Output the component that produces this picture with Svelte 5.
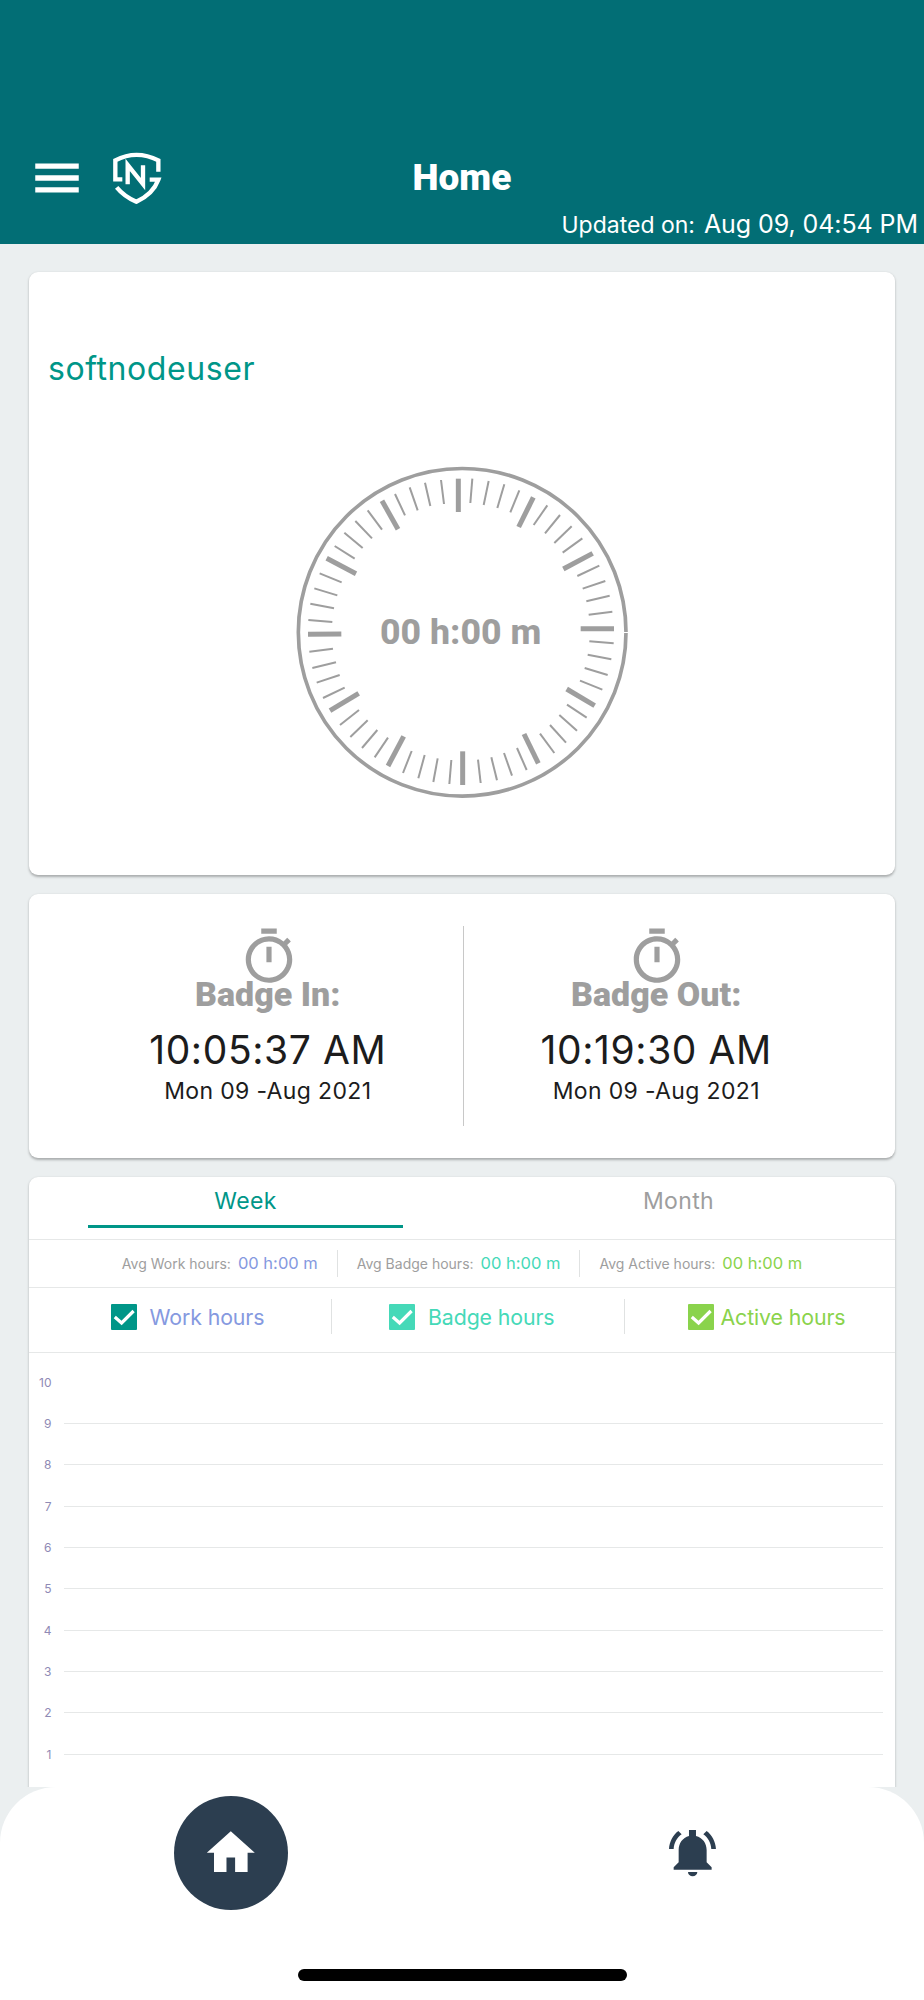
<script lang="ts">
  type Line = [number, number, number, number];

  const hourTicks: Line[] = [
    [535, 86, 535, 186], [760, 142, 716, 231], [938, 310, 850, 357],
    [1002, 536, 902, 536], [944, 767, 860, 717], [775, 940, 732, 852],
    [548, 1005, 548, 904], [324, 948, 371, 859], [150, 782, 236, 730],
    [84, 553, 184, 552], [140, 325, 228, 371], [306, 152, 354, 238]
  ];

  const minuteTicks: Line[] = [
    [577, 86, 571, 159], [626, 93, 611, 165], [673, 103, 652, 174], [718, 121, 691, 187],
    [802, 166, 761, 225], [840, 195, 795, 250], [875, 229, 823, 279], [907, 265, 848, 308],
    [958, 347, 892, 378], [976, 393, 908, 416], [989, 437, 919, 454], [997, 485, 926, 494],
    [1001, 580, 928, 574], [994, 628, 923, 614], [983, 675, 914, 654], [967, 719, 900, 692],
    [920, 803, 861, 764], [891, 842, 838, 795], [858, 878, 810, 825], [823, 909, 780, 851],
    [740, 960, 711, 894], [696, 977, 672, 909], [651, 991, 634, 922], [602, 999, 594, 929],
    [508, 1002, 514, 930], [460, 996, 473, 925], [415, 985, 434, 915], [369, 969, 395, 903],
    [284, 922, 324, 863], [246, 894, 292, 840], [211, 861, 263, 811], [180, 825, 237, 780],
    [129, 744, 194, 713], [110, 698, 179, 675], [97, 654, 168, 637], [88, 605, 159, 596],
    [85, 510, 157, 516], [91, 461, 162, 475], [103, 415, 172, 436], [119, 370, 185, 397],
    [164, 288, 224, 326], [193, 248, 248, 294], [226, 213, 276, 265], [263, 181, 306, 239],
    [345, 132, 375, 196], [389, 112, 413, 181], [435, 98, 451, 168], [483, 90, 492, 162]
  ];

  const badges = [
    { label: 'Badge In:', time: '10:05:37 AM', date: 'Mon 09 -Aug 2021' },
    { label: 'Badge Out:', time: '10:19:30 AM', date: 'Mon 09 -Aug 2021' }
  ];

  const averages = [
    { label: 'Avg Work hours:', value: '00 h:00 m', kind: 'work' },
    { label: 'Avg Badge hours:', value: '00 h:00 m', kind: 'badge' },
    { label: 'Avg Active hours:', value: '00 h:00 m', kind: 'active' }
  ];

  const hours = [10, 9, 8, 7, 6, 5, 4, 3, 2, 1];

  let tab: 'week' | 'month' = 'week';
  let series = [
    { label: 'Work hours', kind: 'work', on: true },
    { label: 'Badge hours', kind: 'badge', on: true },
    { label: 'Active hours', kind: 'active', on: true }
  ];

  function toggle(i: number) {
    series[i].on = !series[i].on;
  }
</script>

<div class="screen">
  <header>
    <div class="bar">
      <div class="bar-left">
        <svg class="menu" viewBox="0 0 24 24"><path d="M3 18h18v-2.2H3zM3 13.1h18v-2.2H3zM3 6v2.2h18V6z" /></svg>
        <svg class="logo" viewBox="340 64 146 158">
          <path d="M368 146H347V89Q410 56 476 89V123" />
          <path d="M450 147H476Q460 190 410 213Q374 198 351 170" />
          <polyline points="384,161 384,103 430,160 430,104" />
        </svg>
      </div>
      <h1>Home</h1>
    </div>
    <p class="updated"><small>Updated on:</small> <span>Aug 09, 04:54 PM</span></p>
  </header>

  <main>
    <section class="card user-card">
      <p class="username">softnodeuser</p>
      <svg class="dial" viewBox="0 0 1092 1092">
        <circle cx="546.5" cy="547" r="491.5" />
        {#each hourTicks as [x1, y1, x2, y2]}
          <line class="hour" {x1} {y1} {x2} {y2} />
        {/each}
        {#each minuteTicks as [x1, y1, x2, y2]}
          <line class="minute" {x1} {y1} {x2} {y2} />
        {/each}
        <line class="gap" x1="1028" y1="547.5" x2="1046" y2="547.5" />
        <text x="542" y="583">00 h:00 m</text>
      </svg>
    </section>

    <section class="card badge-card">
      {#each badges as badge}
        <div class="punch">
          <svg class="timer" viewBox="0 0 24 24">
            <path d="M9 1h6v2H9zM11 8h2v6h-2z" />
            <path d="M19.03 7.39l1.42-1.42c-.43-.51-.9-.99-1.41-1.41l-1.42 1.42C16.07 4.74 14.12 4 12 4c-4.97 0-9 4.03-9 9s4.02 9 9 9 9-4.03 9-9c0-2.12-.74-4.07-1.97-5.61zM12 20c-3.87 0-7-3.13-7-7s3.13-7 7-7 7 3.13 7 7-3.13 7-7 7z" />
          </svg>
          <h2>{badge.label}</h2>
          <p class="time">{badge.time}</p>
          <p class="date">{badge.date}</p>
        </div>
      {/each}
    </section>

    <section class="card chart-card">
      <div class="tabs">
        <button class:selected={tab === 'week'} on:click={() => (tab = 'week')}>Week</button>
        <button class:selected={tab === 'month'} on:click={() => (tab = 'month')}>Month</button>
      </div>

      <div class="averages">
        {#each averages as avg}
          <div class="avg {avg.kind}">
            <span>{avg.label}</span>
            <b>{avg.value}</b>
          </div>
        {/each}
      </div>

      <div class="legend">
        {#each series as item, i}
          <button class="check {item.kind}" on:click={() => toggle(i)}>
            <svg viewBox="0 0 26 26">
              <rect width="26" height="26" rx="1" />
              {#if item.on}<path d="M3.8 13L10.6 19L22.6 7" />{/if}
            </svg>
            <span>{item.label}</span>
          </button>
        {/each}
      </div>

      <div class="chart">
        {#each hours as hour}
          <div class="grid-row" class:top={hour === 10}><span>{hour}</span><i></i></div>
        {/each}
      </div>
    </section>
  </main>

  <nav>
    <div class="nav-items">
      <div class="nav-item">
        <div class="active-dot">
          <svg viewBox="0 0 24 24"><path d="M10.2 20v-6h3.6v6H19v-8h3L12 3 2 12h3v8z" /></svg>
        </div>
      </div>
      <div class="nav-item">
        <svg class="bell" viewBox="328 390 142 142">
          <path d="M388 390h21v18c20 5 32 22 32 42v37l15 15v7h-114v-7l15-15v-37c0-20 12-37 31-42z" />
          <path d="M385 516h28a14 13 0 0 1-28 0z" />
          <path d="M328 447c1-22 12-42 28-54l10 10c-14 10-23 26-24 44z" />
          <path d="M469 447c-1-22-12-42-28-54l-10 10c14 10 23 26 24 44z" />
        </svg>
      </div>
    </div>
    <div class="home-indicator"></div>
  </nav>
</div>

<style>
  :global(body) {
    margin: 0;
  }
  .screen {
    display: flex;
    flex-direction: column;
    width: 924px;
    height: 2000px;
    overflow: hidden;
    background: #ebeff0;
    font-family: Inter, sans-serif;
  }
  h1,
  h2,
  p {
    margin: 0;
  }
  button {
    padding: 0;
    border: 0;
    background: none;
    font: inherit;
    cursor: pointer;
  }

  header {
    box-sizing: border-box;
    flex: none;
    height: 244px;
    padding-top: 148px;
    background: #026e75;
    color: #fff;
  }
  .bar {
    display: grid;
    grid-template-columns: 1fr auto 1fr;
    align-items: center;
    height: 60px;
  }
  .bar-left {
    display: flex;
    align-items: center;
    gap: 27px;
    padding-left: 28px;
  }
  .menu {
    width: 58px;
    height: 58px;
    fill: #fff;
  }
  .logo {
    width: 48.7px;
    height: 52.7px;
    fill: none;
    stroke: #fff;
    stroke-width: 13;
  }
  h1 {
    font: 900 37px/58px Roboto, sans-serif;
  }
  .updated {
    display: flex;
    justify-content: flex-end;
    align-items: baseline;
    gap: 9px;
    margin-top: 1px;
    padding-right: 6px;
    font-size: 25px;
    line-height: 30px;
    letter-spacing: -0.08px;
  }
  .updated small {
    font-size: 23px;
    letter-spacing: 0;
  }

  main {
    display: flex;
    flex: 1;
    flex-direction: column;
    min-height: 0;
    padding: 28px 29px 0;
    overflow: hidden;
  }
  .card {
    flex: none;
    border-radius: 9px;
    background: #fff;
    box-shadow: 0 1.5px 2.5px rgba(0, 0, 0, 0.28);
  }

  .user-card {
    display: flex;
    flex-direction: column;
    height: 603px;
  }
  .username {
    padding: 77px 0 0 19px;
    color: #009688;
    font-size: 32px;
    line-height: 40px;
    letter-spacing: 0.57px;
  }
  .dial {
    align-self: center;
    width: 364px;
    height: 364px;
    margin-top: 61px;
    fill: none;
    stroke: #9e9e9e;
  }
  .dial circle {
    stroke-width: 11;
  }
  .hour {
    stroke-width: 15;
  }
  .minute {
    stroke-width: 6;
  }
  .gap {
    stroke: #fff;
    stroke-width: 3;
  }
  .dial text {
    fill: #9e9e9e;
    stroke: none;
    font: 800 107px Roboto, sans-serif;
    text-anchor: middle;
  }

  .badge-card {
    box-sizing: border-box;
    display: flex;
    height: 264px;
    margin-top: 19px;
    padding: 32px 44px 32px 46px;
  }
  .punch {
    display: flex;
    flex: 1;
    flex-direction: column;
    align-items: center;
  }
  .punch + .punch {
    border-left: 1px solid #c8c8c8;
  }
  .timer {
    width: 62px;
    height: 62px;
    fill: #9e9e9e;
  }
  h2 {
    margin-top: -14px;
    padding-right: 2px;
    color: #9e9e9e;
    font: 900 34px/40px Roboto, sans-serif;
  }
  .time {
    margin-top: 13px;
    padding-right: 2px;
    color: #1c1c1c;
    font-size: 39px;
    font-weight: 400;
    line-height: 46px;
    letter-spacing: 0.6px;
  }
  .date {
    margin-top: 3px;
    padding-right: 2px;
    color: #1c1c1c;
    font-size: 23px;
    font-weight: 400;
    line-height: 30px;
    letter-spacing: 0.35px;
  }

  .chart-card {
    height: 700px;
    margin-top: 19px;
  }
  .tabs {
    display: flex;
    height: 62px;
    border-bottom: 1px solid #e6e8e8;
  }
  .tabs button {
    flex: 1;
    height: 51px;
    margin: 0 59px;
    border-bottom: 3px solid transparent;
    color: #9e9e9e;
    font-size: 23px;
    letter-spacing: 0.35px;
  }
  .tabs .selected {
    border-color: #009688;
    color: #009688;
  }
  .averages {
    display: flex;
    align-items: center;
    justify-content: center;
    height: 47px;
    border-bottom: 1px solid #e6e8e8;
  }
  .avg {
    display: flex;
    align-items: baseline;
    gap: 7px;
    padding: 0 19px;
    color: #9e9e9e;
    font-size: 14px;
    line-height: 26px;
  }
  .avg + .avg {
    border-left: 1px solid #e0e2e2;
  }
  .avg b {
    font-size: 16.5px;
    font-weight: 400;
  }
  .legend {
    display: flex;
    height: 64px;
    border-bottom: 1px solid #e6e8e8;
  }
  .check {
    display: flex;
    align-items: center;
    box-sizing: border-box;
    height: 35px;
    margin-top: 11px;
    font-size: 21.3px;
    letter-spacing: -0.1px;
  }
  .check svg {
    width: 26px;
    height: 26px;
    margin-right: 13px;
    fill: currentColor;
  }
  .check path {
    fill: none;
    stroke: #fff;
    stroke-width: 3.2;
  }
  .check.work {
    width: 302px;
    padding-left: 81.5px;
    color: #009688;
  }
  .check.badge {
    width: 293px;
    padding-left: 57px;
    border-left: 1px solid #e0e2e2;
  }
  .check.active {
    padding-left: 62.5px;
    border-left: 1px solid #e0e2e2;
  }
  .check.active svg {
    margin-right: 7px;
  }
  .work b,
  .work span {
    color: #8599e0;
  }
  .badge b,
  .check.badge {
    color: #45d9b8;
  }
  .active b,
  .check.active {
    color: #8ad34c;
  }
  .avg span {
    color: #9e9e9e;
  }

  .chart {
    padding: 8.7px 12px 0 0;
  }
  .grid-row {
    display: flex;
    align-items: center;
    height: 41.3px;
  }
  .grid-row span {
    width: 22.5px;
    margin-right: 12.5px;
    color: #8f8ab5;
    font-size: 12px;
    text-align: right;
  }
  .grid-row i {
    flex: 1;
    height: 1px;
    background: #e6e8e8;
  }
  .grid-row.top i {
    background: none;
  }

  nav {
    flex: none;
    height: 213px;
    border-radius: 56px 56px 0 0;
    background: #fff;
  }
  .nav-items {
    display: flex;
    padding-top: 9px;
  }
  .nav-item {
    display: flex;
    flex: 1;
    align-items: center;
    justify-content: center;
  }
  .active-dot {
    display: flex;
    align-items: center;
    justify-content: center;
    width: 114px;
    height: 114px;
    border-radius: 50%;
    background: #2c3e50;
  }
  .active-dot svg {
    width: 57.6px;
    height: 57.6px;
    fill: #fff;
  }
  .bell {
    width: 47.3px;
    height: 47.3px;
    margin-top: 2px;
    fill: #2c3e50;
  }
  .home-indicator {
    width: 329px;
    height: 12px;
    margin: 59px auto 0;
    border-radius: 6px;
    background: #000;
  }
</style>
